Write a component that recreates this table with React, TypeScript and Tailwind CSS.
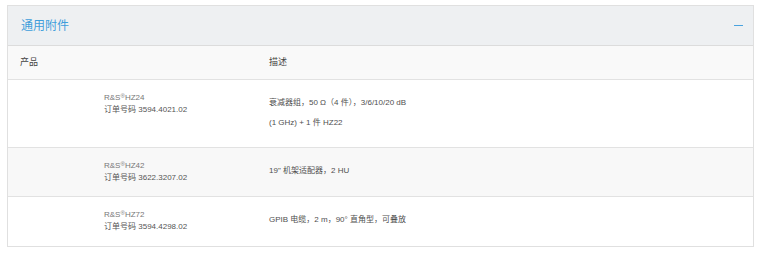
import React from 'react'

type Accessory = {
  name: string
  order: string
  desc: string[]
}

const accessories: Accessory[] = [
  { name: 'HZ24', order: '3594.4021.02', desc: ['衰减器组，50 Ω（4 件），3/6/10/20 dB', '(1 GHz) + 1 件 HZ22'] },
  { name: 'HZ42', order: '3622.3207.02', desc: ['19" 机架适配器，2 HU'] },
  { name: 'HZ72', order: '3594.4298.02', desc: ['GPIB 电缆，2 m，90° 直角型，可叠放'] },
]

const font = 'font-["Liberation_Sans","Noto_Sans_CJK_SC",sans-serif]'

const AccessoryRow = ({ item, index }: { item: Accessory; index: number }) => (
  <div
    className={`grid grid-cols-[249px_1fr] pl-3 border-b border-[#e2e2e2] last:border-b-0 last:min-h-[49px] ${
      index % 2 === 1 ? 'bg-[#f8f8f8]' : 'bg-white'
    }`}
  >
    {/* product cell, image area left blank */}
    <div className="pl-[84px] pt-3 pb-3 text-[8px] leading-3">
      <div className="text-[#777]">
        R&amp;S<span className="text-[6px] align-top leading-[8px]">®</span>
        {item.name}
      </div>
      <div className="text-[#555]">订单号码 {item.order}</div>
    </div>
    <div className="pt-[17px] pb-[18px] text-[8px] leading-3 text-[#4f4f4f] flex flex-col gap-2">
      {item.desc.map((line) => (
        <div key={line}>{line}</div>
      ))}
    </div>
  </div>
)

export default function App() {
  return (
    <div className={`bg-white w-[760px] h-[254px] pt-[5px] pl-[7px] ${font}`}>
      <div className="w-[747px] border border-[#e0e0e0]">
        {/* panel header */}
        <div className="h-[40px] bg-[#eef0f2] border-b border-[#dcdcdc] flex items-center justify-between pl-[13px] pr-[10px]">
          <span className="text-[12px] text-[#3f9edb]">通用附件</span>
          <span className="block w-[9px] h-[1.5px] bg-[#4aa3df]" />
        </div>

        {/* table head */}
        <div className="h-[34px] bg-[#f9f9f9] border-b border-[#e2e2e2] grid grid-cols-[249px_1fr] items-center pl-3 text-[9px] text-[#444]">
          <span>产品</span>
          <span>描述</span>
        </div>

        {accessories.map((item, i) => (
          <AccessoryRow key={item.name} item={item} index={i} />
        ))}
      </div>
    </div>
  )
}
